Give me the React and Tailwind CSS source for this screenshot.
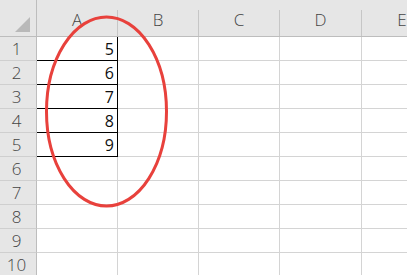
const cols = ["A", "B", "C", "D", "E"];
const widths = ["w-[81px]", "w-[81px]", "w-[81px]", "w-[82px]", "w-[81px]"];
const values = { 1: 5, 2: 6, 3: 7, 4: 8, 5: 9 };
const rows = [1, 2, 3, 4, 5, 6, 7, 8, 9, 10];

const font = { fontFamily: '"Open Sans", "Noto Sans CJK SC", sans-serif' };

const App = () => {
  return (
    <div className="relative w-[407px] h-[275px] overflow-hidden bg-white font-light" style={font}>
      {/* header row */}
      <div className="flex h-[37px] bg-[#e6e6e6] border-b border-[#bdbdbd]">
        <div className="w-[37px] shrink-0 border-r border-[#bdbdbd] flex items-end justify-end pr-[6px] pb-[4px]">
          <svg width="15" height="15" viewBox="0 0 15 15">
            <polygon points="15,0 15,15 0,15" fill="#b9b9b9" />
          </svg>
        </div>
        {cols.map((c, i) => (
          <div key={c} className={`${widths[i]} shrink-0 flex items-end`}>
            <div className="w-full h-[26px] border-r border-[#c6c6c6] flex items-start justify-center text-[17px] leading-[20px] text-[#444]">
              {c}
            </div>
          </div>
        ))}
      </div>

      {/* data rows */}
      {rows.map((r) => (
        <div key={r} className="flex h-6">
          <div className="w-[37px] shrink-0 bg-[#e6e6e6] border-r border-[#bdbdbd] border-b border-b-[#cfcfcf] flex items-center justify-center pr-[3px] text-[17px] text-[#444]">
            {r}
          </div>
          {cols.map((c, i) =>
            c === "A" && values[r] ? (
              <div
                key={c}
                className={`${widths[i]} shrink-0 border-r border-b border-black flex items-center justify-end pr-[3px] text-[16px] font-normal text-[#111]`}
              >
                {values[r]}
              </div>
            ) : (
              <div key={c} className={`${widths[i]} shrink-0 border-r border-b border-[#d4d4d4]`} />
            )
          )}
        </div>
      ))}

      {/* red circle overlay */}
      <svg className="absolute left-0 top-0 pointer-events-none" width="407" height="275">
        <ellipse cx="106.5" cy="111.5" rx="60" ry="94.5" fill="none" stroke="#e8413c" strokeWidth="3" />
      </svg>
    </div>
  );
};

export default App;
